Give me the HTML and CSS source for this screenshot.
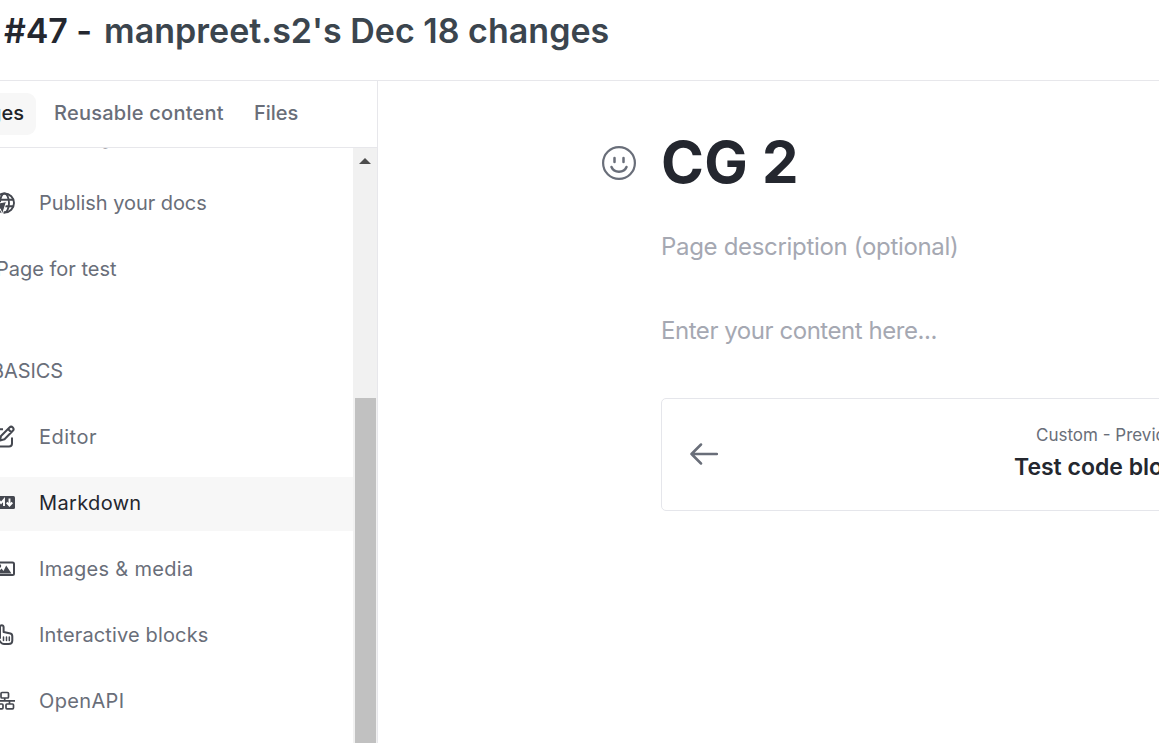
FILE: index.html
```html
<!DOCTYPE html>
<html lang="en">
<head>
<meta charset="utf-8">
<title>CG 2</title>
<link rel="stylesheet" href="styles.css">
</head>
<body>
<div class="app">
  <header class="topbar"><span class="number">#47 -</span><span class="subject">manpreet.s2's Dec 18 changes</span></header>
  <div class="main">
    <aside class="sidebar">
      <nav class="tabs">
        <div class="tab active"><span class="t-pages">Pages</span></div>
        <div class="tab"><span class="t-reuse">Reusable content</span></div>
        <div class="tab"><span class="t-files">Files</span></div>
      </nav>
      <div class="scroller">
        <div class="list">
          <div class="item"><span class="icon"></span><span class="t-hidden">Configure your site</span></div>
          <div class="item">
            <svg class="icon" viewBox="0 0 24 24" fill="none" stroke="#454850" stroke-width="1.9"><circle cx="13.5" cy="12" r="9.5"/><ellipse cx="13.5" cy="12" rx="4.5" ry="9.5"/><path d="M4 8.8h19M12 15.2h11"/><path d="M3 13l12.500-2.500-4 12.500-2.500-5.500z" fill="#454850" stroke="#fff" stroke-width="1"/></svg>
            <span class="t-publish">Publish your docs</span></div>
          <div class="item plain"><span class="t-page">Page for test</span></div>
          <div class="item section"><span class="t-basics">BASICS</span></div>
          <div class="item">
            <svg class="icon" viewBox="0 0 24 24" fill="none" stroke="#454850" stroke-width="2" stroke-linejoin="round"><path d="M12 4.200H5.500A3 3 0 0 0 2.500 7v11.500A3 3 0 0 0 5.500 21.500H18A3 3 0 0 0 21 18.500V12.500"/><path d="M9 15.500l1-4.500 8.500-8.500a2.300 2.300 0 0 1 3.300 3.300L13.500 14.300z M17 4l3.300 3.300"/></svg>
            <span class="t-editor">Editor</span></div>
          <div class="item selected">
            <svg class="icon" viewBox="0 0 24 24"><rect y="5" width="24" height="13" rx="1.500" fill="#454850"/><path d="M7 15V8.500l3 3.500 3-3.500V15M18.500 7.500v6.500M15.700 11.500l2.800 3 2.800-3" fill="none" stroke="#fff" stroke-width="1.900"/></svg>
            <span class="t-markdown">Markdown</span></div>
          <div class="item">
            <svg class="icon" viewBox="0 0 24 24"><rect x="1" y="5.500" width="22" height="12.500" rx="1.500" fill="none" stroke="#454850" stroke-width="2"/><circle cx="8.500" cy="9" r="1.700" fill="#454850"/><path d="M6 16.500l4.500-5 2 2.500L15.200 8.500l5.300 8z" fill="#454850"/></svg>
            <span class="t-images">Images &amp; media</span></div>
          <div class="item">
            <svg class="icon" viewBox="0 0 24 24" fill="none" stroke="#454850" stroke-width="2" stroke-linejoin="round" stroke-linecap="round"><path d="M9 15V4a1.800 1.800 0 0 1 3.600 0v5l6.900 1.500q1.800.5 1.800 3v4q0 3.500-3.800 3.500h-4.500q-2 0-3.500-2l-4-5q1-2.500 3.500 0z"/><path d="M12.500 14v3.500M15.500 14v3.500M18.300 14v3.500" stroke-width="1.500"/></svg>
            <span class="t-inter">Interactive blocks</span></div>
          <div class="item">
            <svg class="icon" viewBox="0 0 24 24" fill="none" stroke="#454850" stroke-width="1.700"><rect x="10" y="3.500" width="7.500" height="5.500" rx="1"/><path d="M0 11.800h24M13.700 9v3M8 12v3M18.500 12v3"/><rect x="5" y="15" width="7" height="4.800" rx="1"/><rect x="15" y="15" width="7.500" height="4.800" rx="1"/></svg>
            <span class="t-open">OpenAPI</span></div>
        </div>
        <div class="scrollbar">
          <svg class="up" viewBox="0 0 12 6"><path d="M0 6L6 0l6 6z" fill="#4d4d4d"/></svg>
          <div class="thumb"></div>
        </div>
      </div>
    </aside>
    <main class="content">
      <div class="heading">
        <svg class="smile" viewBox="0 0 34 34" fill="none" stroke="#696e79" stroke-width="2.200" stroke-linecap="round"><circle cx="17" cy="17" r="15.900"/><path d="M12.500 12v4M21.500 12v4M9.500 21c2.500 6.200 12.500 6.200 15 0" stroke-width="2.500"/></svg>
        <h1><span class="t-title">CG 2</span></h1>
      </div>
      <p class="description"><span class="t-desc">Page description (optional)</span></p>
      <p class="placeholder"><span class="t-enter">Enter your content here...</span></p>
      <div class="card">
        <svg class="arrow" viewBox="0 0 28 22" fill="none" stroke="#696e79" stroke-width="2.500" stroke-linecap="round" stroke-linejoin="round"><path d="M11 1.500L1.500 11l9.500 9.500M1.500 11H27"/></svg>
        <div class="previous"><span class="t-custom">Custom - Previous</span><strong class="t-test">Test code block</strong></div>
      </div>
    </main>
  </div>
</div>
</body>
</html>
```
FILE: styles.css
```css
* { box-sizing: border-box; }
body { margin: 0; background: #fff; color: #24272f; font-family: Inter, "Liberation Sans", sans-serif; overflow: hidden; }
.app { display: flex; flex-direction: column; width: 1159px; height: 743px; overflow: hidden; }
.topbar { flex: 0 0 81px; border-bottom: 1px solid #e7e7eb; padding: 9px 0 0 4px; display: flex; gap: 12px; font-size: 34px; line-height: 44px; font-weight: 600; white-space: nowrap; }
.number { width: 88px; letter-spacing: -0.1px; }
.subject { color: #3b454e; letter-spacing: 0.02px; }
.main { flex: 1; display: flex; min-height: 0; }
.sidebar { width: 378px; flex: none; display: flex; flex-direction: column; overflow: hidden; }
.tabs { flex: 0 0 67px; display: flex; align-items: flex-start; padding-top: 12px; margin-left: -42px; border-right: 1px solid #e7e7eb; border-bottom: 1px solid #e7e7eb; font-size: 20px; line-height: 40px; font-weight: 500; color: #696e79; white-space: nowrap; }
.tab { height: 42px; margin-right: 6px; padding: 0 12px; border-radius: 9px; }
.t-reuse { letter-spacing: 0.25px; }
.tab.active { background: #f7f7f7; color: #202328; width: 78px; display: flex; justify-content: flex-end; }
.scroller { flex: 1; min-height: 0; display: flex; overflow: hidden; }
.list { width: 353px; flex: none; overflow: hidden; display: flex; flex-direction: column; gap: 12px; margin-top: -38px; }
.item { height: 54px; flex: none; display: flex; align-items: center; gap: 24px; margin-left: -9px; font-size: 20px; line-height: 28px; color: #696e79; white-space: nowrap; }
.icon { width: 24px; height: 24px; flex: none; }
.plain { padding-left: 5px; }
.section { margin-top: 36px; }
.selected { background: #f7f7f7; color: #24272f; margin-top: 1px; margin-bottom: -1px; padding-bottom: 2px; }
.t-hidden { letter-spacing: 0.9px; margin-left: 5px; }
.t-publish { letter-spacing: -0.05px; }
.t-basics { letter-spacing: -0.1px; }
.t-editor { letter-spacing: 0.5px; }
.t-markdown { letter-spacing: 0.35px; }
.t-images { letter-spacing: 0.3px; }
.t-inter { letter-spacing: 0.14px; }
.t-open { letter-spacing: 0.35px; }
.scrollbar { width: 25px; background: #f1f1f1; display: flex; flex-direction: column; align-items: center; padding: 10px 1px 0 0; }
.up { width: 12px; height: 6px; flex: none; }
.thumb { width: 21px; flex: 1; margin: 234px 0 0 1px; background: #c1c1c1; }
.content { flex: none; width: 1100px; border-left: 1px solid #e7e7eb; margin-left: -1px; padding: 41px 0 0 224px; }
.heading { display: flex; align-items: center; gap: 25px; height: 80px; }
.smile { width: 34px; height: 34px; margin-top: 2px; }
h1 { margin: 0; font-size: 58px; line-height: 80px; font-weight: 700; letter-spacing: 0.3px; white-space: nowrap; }
p { margin: 0 0 0 59px; font-size: 24px; line-height: 36px; color: #a5a8b2; white-space: nowrap; }
.description { margin-top: 27px; letter-spacing: -0.32px; }
.placeholder { margin-top: 48px; letter-spacing: -0.45px; }
.card { margin: 49px 0 0 59px; width: 600px; height: 113px; border: 1px solid #e5e6eb; border-radius: 5px; display: flex; align-items: center; padding: 0 0 2px 28px; }
.arrow { width: 28px; height: 22px; flex: none; }
.previous { margin-left: 296px; padding-bottom: 2px; display: grid; white-space: nowrap; }
.t-custom { margin-left: 22px; font-size: 17px; line-height: 28px; color: #696e79; }
.t-test { font-size: 23px; line-height: 36px; font-weight: 600; }
```
